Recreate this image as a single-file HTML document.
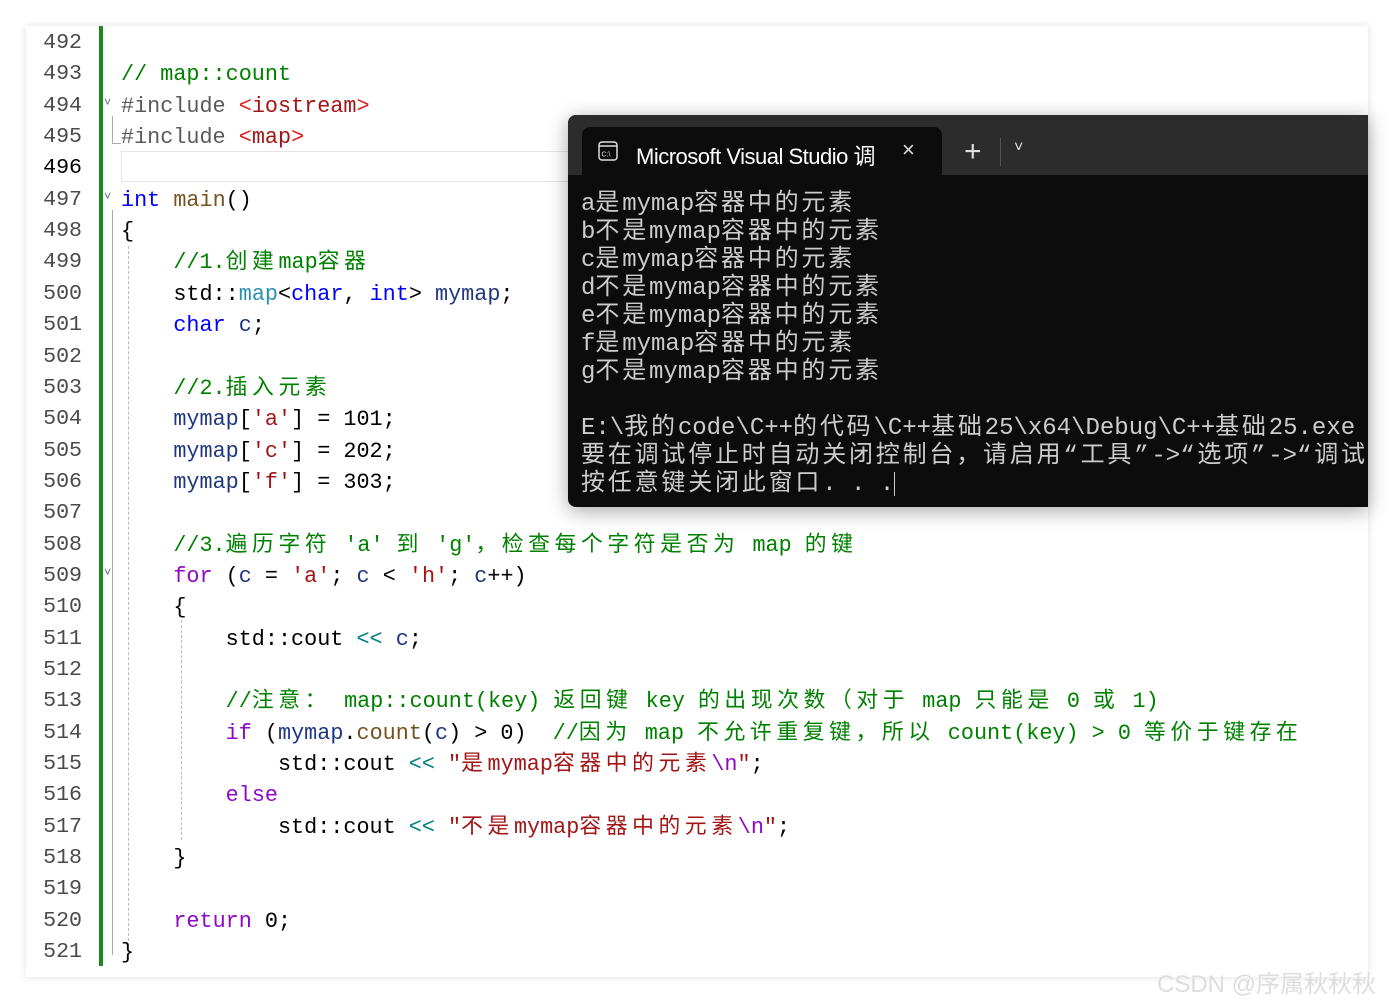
<!DOCTYPE html>
<html><head><meta charset="utf-8"><style>
body{margin:0;width:1394px;height:1003px;background:#fff;position:relative;overflow:hidden;font-family:"Liberation Mono","Noto Sans CJK SC",monospace}
.card{position:absolute;left:26px;top:26px;width:1342px;height:951px;background:#fff;box-shadow:0 0 8px rgba(0,0,0,.12)}
.ln{position:absolute;left:26px;width:56px;text-align:right;font-size:21.6px;color:#4a4a4a;height:31.35px;line-height:31.35px;margin-top:2px}
.cl{position:absolute;left:121px;font-size:21.8px;white-space:pre;height:31.35px;line-height:31.35px;color:#000;margin-top:2px}
.c{letter-spacing:4.6px}
.cm{color:#008000}.kw{color:#0000ff}.pk{color:#8f08c4}.st{color:#a31515}.ab{color:#e0201a}.v{color:#1f377f}.f{color:#74531f}.t{color:#2b91af}.op{color:#008080}.pp{color:#5a5a5a}.es{color:#8f08c4}
.term{position:absolute;left:568px;top:115px;width:800px;height:392px;background:#0c0c0c;border-radius:8px 0 0 8px;box-shadow:0 4px 20px rgba(0,0,0,.35);overflow:hidden}
.bar{position:absolute;left:0;top:0;right:0;height:60px;background:#2c2c2c}
.tab{position:absolute;left:14px;top:12px;width:360px;height:48px;background:#0c0c0c;border-radius:8px 8px 0 0}
.tl{position:absolute;left:13px;font-size:24px;color:#ccc;white-space:pre;line-height:28px;font-family:"Liberation Mono","Noto Sans CJK SC",monospace}
.k{letter-spacing:2.8px}
</style></head><body>
<div class="card"></div>
<div style="position:absolute;left:99px;top:26px;width:4px;height:940px;background:#1a8a1a"></div>
<div style="position:absolute;left:121px;top:151px;width:460px;height:29px;border:1px solid #e4e4e4;border-right:none"></div>
<div style="position:absolute;left:112px;top:116px;width:8px;height:27px;border-left:1px solid #aaa;border-bottom:1px solid #aaa"></div>
<div style="position:absolute;left:112px;top:210px;height:745px;border-left:1px solid #aaa"></div>
<div style="position:absolute;left:128px;top:246px;height:700px;border-left:1px dashed #bbb"></div>
<div style="position:absolute;left:181px;top:620px;height:220px;border-left:1px dashed #bbb"></div>
<div style="position:absolute;left:104px;top:96px;font-size:12px;color:#666">˅</div>
<div style="position:absolute;left:104px;top:190px;font-size:12px;color:#666">˅</div>
<div style="position:absolute;left:104px;top:566px;font-size:12px;color:#666">˅</div>

<div class="ln" style="top:26px">492</div>
<div class="ln" style="top:57.35px">493</div>
<div class="ln" style="top:88.7px">494</div>
<div class="ln" style="top:120.05px">495</div>
<div class="ln" style="top:151.4px;color:#000">496</div>
<div class="ln" style="top:182.75px">497</div>
<div class="ln" style="top:214.1px">498</div>
<div class="ln" style="top:245.45px">499</div>
<div class="ln" style="top:276.8px">500</div>
<div class="ln" style="top:308.15px">501</div>
<div class="ln" style="top:339.5px">502</div>
<div class="ln" style="top:370.85px">503</div>
<div class="ln" style="top:402.2px">504</div>
<div class="ln" style="top:433.55px">505</div>
<div class="ln" style="top:464.9px">506</div>
<div class="ln" style="top:496.25px">507</div>
<div class="ln" style="top:527.6px">508</div>
<div class="ln" style="top:558.95px">509</div>
<div class="ln" style="top:590.3px">510</div>
<div class="ln" style="top:621.65px">511</div>
<div class="ln" style="top:653px">512</div>
<div class="ln" style="top:684.35px">513</div>
<div class="ln" style="top:715.7px">514</div>
<div class="ln" style="top:747.05px">515</div>
<div class="ln" style="top:778.4px">516</div>
<div class="ln" style="top:809.75px">517</div>
<div class="ln" style="top:841.1px">518</div>
<div class="ln" style="top:872.45px">519</div>
<div class="ln" style="top:903.8px">520</div>
<div class="ln" style="top:935.15px">521</div>

<div class="cl cm" style="top:57.35px">// map::count</div>
<div class="cl" style="top:88.7px"><span class="pp">#include</span> <span class="ab">&lt;</span><span class="st">iostream</span><span class="ab">&gt;</span></div>
<div class="cl" style="top:120.05px"><span class="pp">#include</span> <span class="ab">&lt;</span><span class="st">map</span><span class="ab">&gt;</span></div>
<div class="cl" style="top:182.75px"><span class="kw">int</span> <span class="f">main</span>()</div>
<div class="cl" style="top:214.1px">{</div>
<div class="cl cm" style="top:245.45px">    //1.<span class="c">创建</span>map<span class="c">容器</span></div>
<div class="cl" style="top:276.8px">    std::<span class="t">map</span>&lt;<span class="kw">char</span>, <span class="kw">int</span>&gt; <span class="v">mymap</span>;</div>
<div class="cl" style="top:308.15px">    <span class="kw">char</span> <span class="v">c</span>;</div>
<div class="cl cm" style="top:370.85px">    //2.<span class="c">插入元素</span></div>
<div class="cl" style="top:402.2px">    <span class="v">mymap</span>[<span class="st">'a'</span>] = 101;</div>
<div class="cl" style="top:433.55px">    <span class="v">mymap</span>[<span class="st">'c'</span>] = 202;</div>
<div class="cl" style="top:464.9px">    <span class="v">mymap</span>[<span class="st">'f'</span>] = 303;</div>
<div class="cl cm" style="top:527.6px">    //3.<span class="c">遍历字符</span> 'a' <span class="c">到</span> 'g'<span class="c">，检查每个字符是否为</span> map <span class="c">的键</span></div>
<div class="cl" style="top:558.95px">    <span class="pk">for</span> (<span class="v">c</span> = <span class="st">'a'</span>; <span class="v">c</span> &lt; <span class="st">'h'</span>; <span class="v">c</span>++)</div>
<div class="cl" style="top:590.3px">    {</div>
<div class="cl" style="top:621.65px">        std::cout <span class="op">&lt;&lt;</span> <span class="v">c</span>;</div>
<div class="cl cm" style="top:684.35px">        //<span class="c">注意：</span> map::count(key) <span class="c">返回键</span> key <span class="c">的出现次数（对于</span> map <span class="c">只能是</span> 0 <span class="c">或</span> 1)</div>
<div class="cl" style="top:715.7px">        <span class="pk">if</span> (<span class="v">mymap</span>.<span class="f">count</span>(<span class="v">c</span>) &gt; 0)  <span class="cm">//<span class="c">因为</span> map <span class="c">不允许重复键，所以</span> count(key) &gt; 0 <span class="c">等价于键存在</span></span></div>
<div class="cl" style="top:747.05px">            std::cout <span class="op">&lt;&lt;</span> <span class="st">"<span class="c">是</span>mymap<span class="c">容器中的元素</span><span class="es">\n</span>"</span>;</div>
<div class="cl" style="top:778.4px">        <span class="pk">else</span></div>
<div class="cl" style="top:809.75px">            std::cout <span class="op">&lt;&lt;</span> <span class="st">"<span class="c">不是</span>mymap<span class="c">容器中的元素</span><span class="es">\n</span>"</span>;</div>
<div class="cl" style="top:841.1px">    }</div>
<div class="cl" style="top:903.8px">    <span class="pk">return</span> 0;</div>
<div class="cl" style="top:935.15px">}</div>

<div class="term">
 <div class="bar"></div>
 <div class="tab"></div>
 <svg style="position:absolute;left:30px;top:26px" width="20" height="20" viewBox="0 0 20 20"><rect x="1" y="1" width="18" height="18" rx="3" fill="none" stroke="#ddd" stroke-width="1.5"/><line x1="1" y1="5" x2="19" y2="5" stroke="#ddd" stroke-width="1.5"/><text x="3.5" y="15.5" font-size="7" fill="#ddd" font-family="Liberation Sans">C:\</text></svg>
 <div style="position:absolute;left:68px;top:24px;font:22px 'Liberation Sans',sans-serif;color:#fff;letter-spacing:-0.5px;white-space:nowrap;width:246px;overflow:hidden">Microsoft Visual Studio 调</div>
 <div style="position:absolute;left:334px;top:22px;font:22px 'Liberation Sans',sans-serif;color:#ddd">×</div>
 <div style="position:absolute;left:396px;top:20px;font:30px 'Liberation Sans',sans-serif;color:#ddd">+</div>
 <div style="position:absolute;left:432px;top:23px;width:1px;height:28px;background:#555"></div>
 <div style="position:absolute;left:446px;top:24px;font:16px 'Liberation Sans',sans-serif;color:#ddd">˅</div>
 <div class="tl" style="top:76px">a<span class="k">是</span>mymap<span class="k">容器中的元素</span>
b<span class="k">不是</span>mymap<span class="k">容器中的元素</span>
c<span class="k">是</span>mymap<span class="k">容器中的元素</span>
d<span class="k">不是</span>mymap<span class="k">容器中的元素</span>
e<span class="k">不是</span>mymap<span class="k">容器中的元素</span>
f<span class="k">是</span>mymap<span class="k">容器中的元素</span>
g<span class="k">不是</span>mymap<span class="k">容器中的元素</span>

E:\<span class="k">我的</span>code\C++<span class="k">的代码</span>\C++<span class="k">基础</span>25\x64\Debug\C++<span class="k">基础</span>25.exe
<span class="k">要在调试停止时自动关闭控制台，请启用“工具”</span>-&gt;<span class="k">“选项”</span>-&gt;<span class="k">“调试”</span>
<span class="k">按任意键关闭此窗口</span>. . .<span style="display:inline-block;width:1px;height:24px;background:#ccc;vertical-align:middle"></span></div>
</div>
<div style="position:absolute;left:1157px;top:964px;font:24px 'Liberation Sans','Noto Sans CJK SC',sans-serif;color:#ddd;white-space:nowrap">CSDN @序属秋秋秋</div>
</body></html>
